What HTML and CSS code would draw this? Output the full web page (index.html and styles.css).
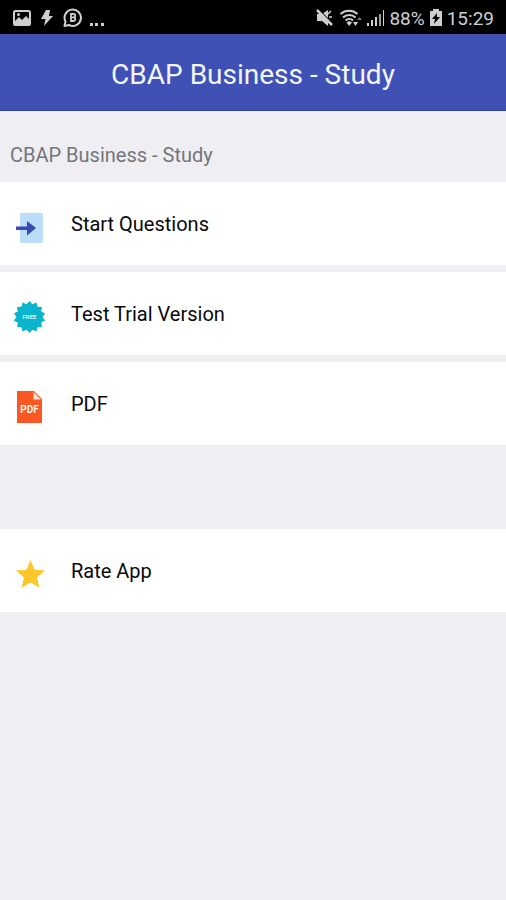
FILE: index.html
```html
<!DOCTYPE html>
<html lang="en">
<head>
<meta charset="utf-8">
<meta name="viewport" content="width=device-width, initial-scale=1">
<title>CBAP Business - Study</title>
<link rel="stylesheet" href="styles.css">
</head>
<body>
<div class="status">
  <div class="status-group status-left">
    <svg class="status-icon" width="20" height="20" viewBox="0 0 20 20" aria-hidden="true">
      <rect x="2" y="3" width="16" height="14" rx="1.5" fill="none" stroke="currentColor" stroke-width="2"/>
      <path d="M3 13l4-4 3 3 4-4 4 4v5H3z" fill="currentColor"/>
      <circle cx="6.5" cy="6.5" r="1.5" fill="currentColor"/>
    </svg>
    <svg class="status-icon" width="20" height="20" viewBox="0 0 20 20" aria-hidden="true">
      <path d="M9 2h4l-1 6h4L7 18l1.500-7H4z" fill="currentColor"/>
    </svg>
    <svg class="status-icon" width="22" height="20" viewBox="0 0 22 20" aria-hidden="true">
      <path d="M2.500 18l1-4.500A8.200 8.200 0 1 1 7 17z" fill="none" stroke="currentColor" stroke-width="2" stroke-linejoin="round"/>
      <path d="M9 6v7h2.500a1.900 1.900 0 0 0 .5-3.700a1.700 1.700 0 0 0-.8-3.300zM9 9.300h3" fill="none" stroke="currentColor" stroke-width="1.800"/>
    </svg>
    <svg class="status-icon" width="18" height="20" viewBox="0 0 18 20" aria-hidden="true">
      <g fill="currentColor"><rect x="1" y="15" width="3" height="3"/><rect x="6" y="15" width="3" height="3"/><rect x="12" y="15" width="3" height="3"/></g>
    </svg>
  </div>
  <div class="status-group status-right">
    <svg class="status-icon" width="20" height="20" viewBox="0 0 20 20" aria-hidden="true">
      <path d="M2 6h5l6-4v16l-6-5H2z" fill="currentColor"/>
      <path d="M13 6l3-3M14 9h3" stroke="currentColor" stroke-width="1.500"/>
      <path d="M4 2l14 14" stroke="#000" stroke-width="1.500"/>
      <path d="M2 2l15 15" stroke="currentColor" stroke-width="2.500"/>
    </svg>
    <svg class="status-icon" width="24" height="20" viewBox="0 0 24 20" aria-hidden="true">
      <g fill="none" stroke="currentColor" stroke-width="2"><path d="M1.500 6a13 13 0 0 1 17 0"/><path d="M4 9.500a9 9 0 0 1 12.500 0"/><path d="M6.500 12.500a5.500 5.500 0 0 1 7.500 0"/></g>
      <path d="M7.500 14.500a4 4 0 0 1 5.500 0l-2.800 3.500z" fill="currentColor"/>
      <path d="M14 14h5l-2.500 4z" fill="currentColor"/>
      <path d="M18 12l2.500-3 2.500 3z" fill="#777"/>
    </svg>
    <svg class="status-icon" width="18" height="20" viewBox="0 0 18 20" aria-hidden="true">
      <g fill="currentColor"><rect x="0" y="15" width="2" height="3"/><rect x="4" y="12" width="2" height="6"/><rect x="8" y="9" width="2" height="9"/><rect x="12" y="6" width="2" height="12" opacity=".75"/><rect x="16" y="2" width="1" height="16"/></g>
    </svg>
    <span>88%</span>
    <svg class="status-icon" width="14" height="20" viewBox="0 0 14 20" aria-hidden="true">
      <path d="M4 1h6v2h3v15H1V3h3z" fill="currentColor"/>
      <path d="M8 5l-5 6h3l-1 5 6-7H8z" fill="#000"/>
    </svg>
    <span>15:29</span>
  </div>
</div>
<header class="bar"><h1>CBAP Business - Study</h1></header>
<main>
  <h2 class="section">CBAP Business - Study</h2>
  <nav class="menu">
    <a class="row" href="#start">
      <svg width="32" height="34" viewBox="0 0 32 34" aria-hidden="true">
        <rect x="6" y="2" width="23" height="30" rx="1" fill="#bbdefb"/>
        <path d="M2 15.500h11V10l9 7-9 7.500v-5.500H2z" fill="#3949b6"/>
      </svg>
      <span>Start Questions</span>
    </a>
    <a class="row" href="#trial">
      <svg width="32" height="34" viewBox="0 0 32 34" aria-hidden="true">
        <path transform="translate(15.5 16)" fill="#09b5cc" d="M0-16L2.900-12.700 6.900-14.400 8.100-10.200 12.500-10 11.700-5.600 15.600-3.600 13 0 15.600 3.600 11.700 5.600 12.500 10 8.100 10.200 6.900 14.400 2.900 12.700 0 16-2.900 12.700-6.900 14.400-8.100 10.200-12.500 10-11.700 5.600-15.600 3.600-13 0-15.600-3.600-11.700-5.600-12.500-10-8.100-10.200-6.900-14.400-2.900-12.700z"/>
        <text class="burst-text" x="15.500" y="18" text-anchor="middle">FREE</text>
      </svg>
      <span>Test Trial Version</span>
    </a>
    <a class="row" href="#pdf">
      <svg width="32" height="34" viewBox="0 0 32 34" aria-hidden="true">
        <path d="M3 0h17l8 8v24H3z" fill="#fb5722"/>
        <path d="M19.500 1v7.500H27z" fill="#fbe3dc"/>
        <text class="pdf-text" x="15.500" y="22" text-anchor="middle">PDF</text>
      </svg>
      <span>PDF</span>
    </a>
    <a class="row row-apart" href="#rate">
      <svg width="32" height="34" viewBox="0 0 32 34" aria-hidden="true">
        <path d="M16.500 2l4.200 9.700 10.300.9-8 7 2.400 10.200-8.900-5.400-8.900 5.400 2.400-10.200-8-7 10.500-.9z" fill="#fdc62b"/>
      </svg>
      <span>Rate App</span>
    </a>
  </nav>
</main>
</body>
</html>
```
FILE: styles.css
```css
* {
  box-sizing: border-box;
}

body {
  margin: 0;
  background: #eeeef3;
  color: #080808;
  font-family: Roboto, "Liberation Sans", sans-serif;
}

h1,
h2 {
  margin: 0;
  font-weight: 400;
}

.status {
  display: flex;
  justify-content: space-between;
  align-items: center;
  height: 34px;
  padding: 2px 12px 0;
  background: #000;
  color: #cfcfcf;
  font-size: 19px;
}

.status-group {
  display: flex;
  align-items: center;
  gap: 5px;
}

.status-right {
  gap: 4px;
}

.status-icon {
  flex: none;
}

.bar {
  padding: 23px 16px 17px;
  background: #3f51b5;
  border-bottom: 1px solid #3544a0;
  color: #f2f5ff;
  text-align: center;
}

.bar h1 {
  font-size: 28px;
  line-height: 36px;
}

.section {
  padding: 32px 10px 15px;
  color: #75757a;
  font-size: 20px;
  line-height: 24px;
}

.menu {
  display: flex;
  flex-direction: column;
  gap: 7px;
}

.row {
  display: flex;
  align-items: center;
  gap: 25px;
  min-height: 83px;
  padding: 8px 14px 0;
  background: #fff;
  color: inherit;
  font-size: 20px;
  line-height: 24px;
  text-decoration: none;
}

.row span {
  padding-bottom: 8px;
}

.row-apart {
  margin-top: 77px;
}

.burst-text {
  fill: #d5f6fa;
  font-size: 6px;
  font-weight: 700;
}

.pdf-text {
  fill: #fff0e8;
  font-size: 10px;
  font-weight: 700;
}
```
